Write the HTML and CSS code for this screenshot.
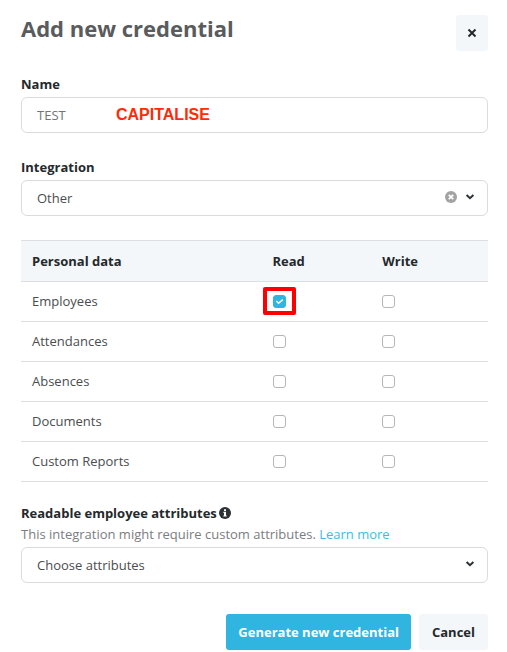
FILE: index.html
```html
<!DOCTYPE html>
<html lang="en">
<head>
  <meta charset="UTF-8">
  <meta name="viewport" content="width=device-width, initial-scale=1.0">
  <title>Add new credential</title>
  <link rel="stylesheet" href="styles.css">
</head>
<body>
  <form class="modal">
    <header class="modal-header">
      <h1>Add new credential</h1>
      <button type="button" class="btn btn-close" aria-label="Close">
        <svg width="10" height="10" viewBox="0 0 10 10"><path d="M1.5 1.5l7 7M8.5 1.5l-7 7" stroke="currentColor" stroke-width="2"/></svg>
      </button>
    </header>

    <div class="field">
      <label for="name">Name</label>
      <div class="control">
        <input type="text" id="name" class="box name-input" value="TEST">
        <span class="note">CAPITALISE</span>
      </div>
    </div>

    <div class="field">
      <label for="integration">Integration</label>
      <div class="control">
        <select id="integration" class="box">
          <option>Other</option>
        </select>
        <div class="icons">
          <button type="button" class="clear" aria-label="Clear">
            <svg width="12" height="12" viewBox="0 0 12 12"><circle cx="6" cy="6" r="6" fill="#a3a3a3"/><path d="M3.8 3.8l4.4 4.4M8.2 3.8L3.8 8.2" stroke="#fff" stroke-width="1.8"/></svg>
          </button>
          <svg class="chevron" width="10" height="6" viewBox="0 0 10 6"><path d="M1.6 1L5 4.2 8.4 1" fill="none" stroke="#2c3133" stroke-width="2"/></svg>
        </div>
      </div>
    </div>

    <table class="permissions">
      <thead>
        <tr><th class="col-data">Personal data</th><th class="col-read">Read</th><th>Write</th></tr>
      </thead>
      <tbody>
        <tr>
          <td>Employees</td>
          <td><span class="check-wrap"><input type="checkbox" aria-label="Employees read" checked><span class="marker"></span></span></td>
          <td><span class="check-wrap"><input type="checkbox" aria-label="Employees write"></span></td>
        </tr>
        <tr>
          <td>Attendances</td>
          <td><span class="check-wrap"><input type="checkbox" aria-label="Attendances read"></span></td>
          <td><span class="check-wrap"><input type="checkbox" aria-label="Attendances write"></span></td>
        </tr>
        <tr>
          <td>Absences</td>
          <td><span class="check-wrap"><input type="checkbox" aria-label="Absences read"></span></td>
          <td><span class="check-wrap"><input type="checkbox" aria-label="Absences write"></span></td>
        </tr>
        <tr>
          <td>Documents</td>
          <td><span class="check-wrap"><input type="checkbox" aria-label="Documents read"></span></td>
          <td><span class="check-wrap"><input type="checkbox" aria-label="Documents write"></span></td>
        </tr>
        <tr>
          <td>Custom Reports</td>
          <td><span class="check-wrap"><input type="checkbox" aria-label="Custom Reports read"></span></td>
          <td><span class="check-wrap"><input type="checkbox" aria-label="Custom Reports write"></span></td>
        </tr>
      </tbody>
    </table>

    <div class="field">
      <div class="label-row">
        <label for="attributes">Readable employee attributes</label>
        <svg width="12" height="12" viewBox="0 0 12 12"><circle cx="6" cy="6" r="6" fill="#2c3133"/><path d="M5 2.2h2v1.7H5zM4.4 4.8H7v3.6h.7v1.2H4.3V8.4H5V6h-.6z" fill="#fff"/></svg>
      </div>
      <p class="help">This integration might require custom attributes. <a href="#">Learn more</a></p>
      <div class="control">
        <select id="attributes" class="box">
          <option>Choose attributes</option>
        </select>
        <div class="icons">
          <svg class="chevron" width="10" height="6" viewBox="0 0 10 6"><path d="M1.6 1L5 4.2 8.4 1" fill="none" stroke="#2c3133" stroke-width="2"/></svg>
        </div>
      </div>
    </div>

    <footer class="modal-footer">
      <button type="submit" class="btn btn-primary">Generate new credential</button>
      <button type="button" class="btn">Cancel</button>
    </footer>
  </form>
</body>
</html>
```
FILE: styles.css
```css
* {
  box-sizing: border-box;
}

body {
  margin: 0;
  background: #fff;
  color: #4a4d4f;
  font-family: "Open Sans", sans-serif;
  font-size: 13px;
  line-height: 20px;
}

.modal {
  padding: 15px 19px 0 21px;
}

.modal-header {
  display: flex;
  justify-content: space-between;
  align-items: flex-start;
  margin-bottom: 23px;
}

.modal-header h1 {
  margin: 0;
  font-size: 22px;
  line-height: 26px;
  color: #595b5c;
}

.field label {
  display: block;
  font-weight: bold;
  color: #24292b;
}

.field {
  margin-bottom: 24px;
}

.control {
  position: relative;
  margin-top: 3px;
}

.box {
  display: block;
  width: 100%;
  height: 36px;
  padding: 0 15px;
  border: 1px solid #d9dbdc;
  border-radius: 6px;
  background: #fff;
  color: #4a4d4f;
  font: inherit;
  appearance: none;
}

.name-input {
  color: #727476;
}

.note {
  position: absolute;
  top: 8px;
  left: 95px;
  color: #ff2a08;
  font-family: "Liberation Sans", sans-serif;
  font-size: 16px;
  font-weight: bold;
}

.icons {
  position: absolute;
  top: 0;
  right: 13px;
  height: 34px;
  display: flex;
  align-items: center;
  gap: 8px;
}

.clear {
  display: flex;
  padding: 0;
  border: 0;
  background: none;
}

.permissions {
  width: 100%;
  margin-bottom: 20px;
  border-collapse: collapse;
  table-layout: fixed;
}

.permissions tr {
  height: 40px;
  border-bottom: 1px solid #dcdedf;
}

.permissions thead tr {
  height: 41px;
  border-top: 1px solid #dcdedf;
  background: #f3f7fa;
  color: #24292b;
}

.permissions th,
.permissions td {
  padding: 0 11px 1px;
  text-align: left;
}

.col-data {
  width: 51.5%;
}

.col-read {
  width: 23.5%;
}

.check-wrap {
  position: relative;
  display: flex;
  width: 13px;
}

input[type="checkbox"] {
  width: 13px;
  height: 13px;
  margin: 0;
  border: 1px solid #b4b6b7;
  border-radius: 3px;
  background: #fff;
  appearance: none;
}

input[type="checkbox"]:checked {
  border-color: #2fb5df;
  background: #2fb5df url("data:image/svg+xml,%3Csvg xmlns='http://www.w3.org/2000/svg' viewBox='0 0 11 11'%3E%3Cpath d='M2.3 5l2.2 2.2L8.8 3.6' fill='none' stroke='white' stroke-width='1.4'/%3E%3C/svg%3E");
}

.marker {
  position: absolute;
  inset: -8px -10px -7px;
  border: 4px solid #f00;
  border-radius: 2px;
  pointer-events: none;
}

.label-row {
  display: flex;
  align-items: center;
  gap: 2px;
  margin-top: 21px;
}

.help {
  margin: 1px 0 0;
  color: #7b7d7f;
}

.help a {
  color: #3fbbe2;
  text-decoration: none;
}

.modal-footer {
  display: flex;
  justify-content: flex-end;
  gap: 8px;
  margin-top: 31px;
}

.btn {
  height: 36px;
  padding: 0 13px;
  border: 0;
  border-radius: 3px;
  background: #f3f7fa;
  color: #24292b;
  font: inherit;
  font-weight: bold;
}

.btn-close {
  display: flex;
  align-items: center;
  justify-content: center;
  width: 32px;
  padding: 0;
}

.btn-primary {
  padding: 0 12px;
  background: #2fb5df;
  color: #fff;
}
```
